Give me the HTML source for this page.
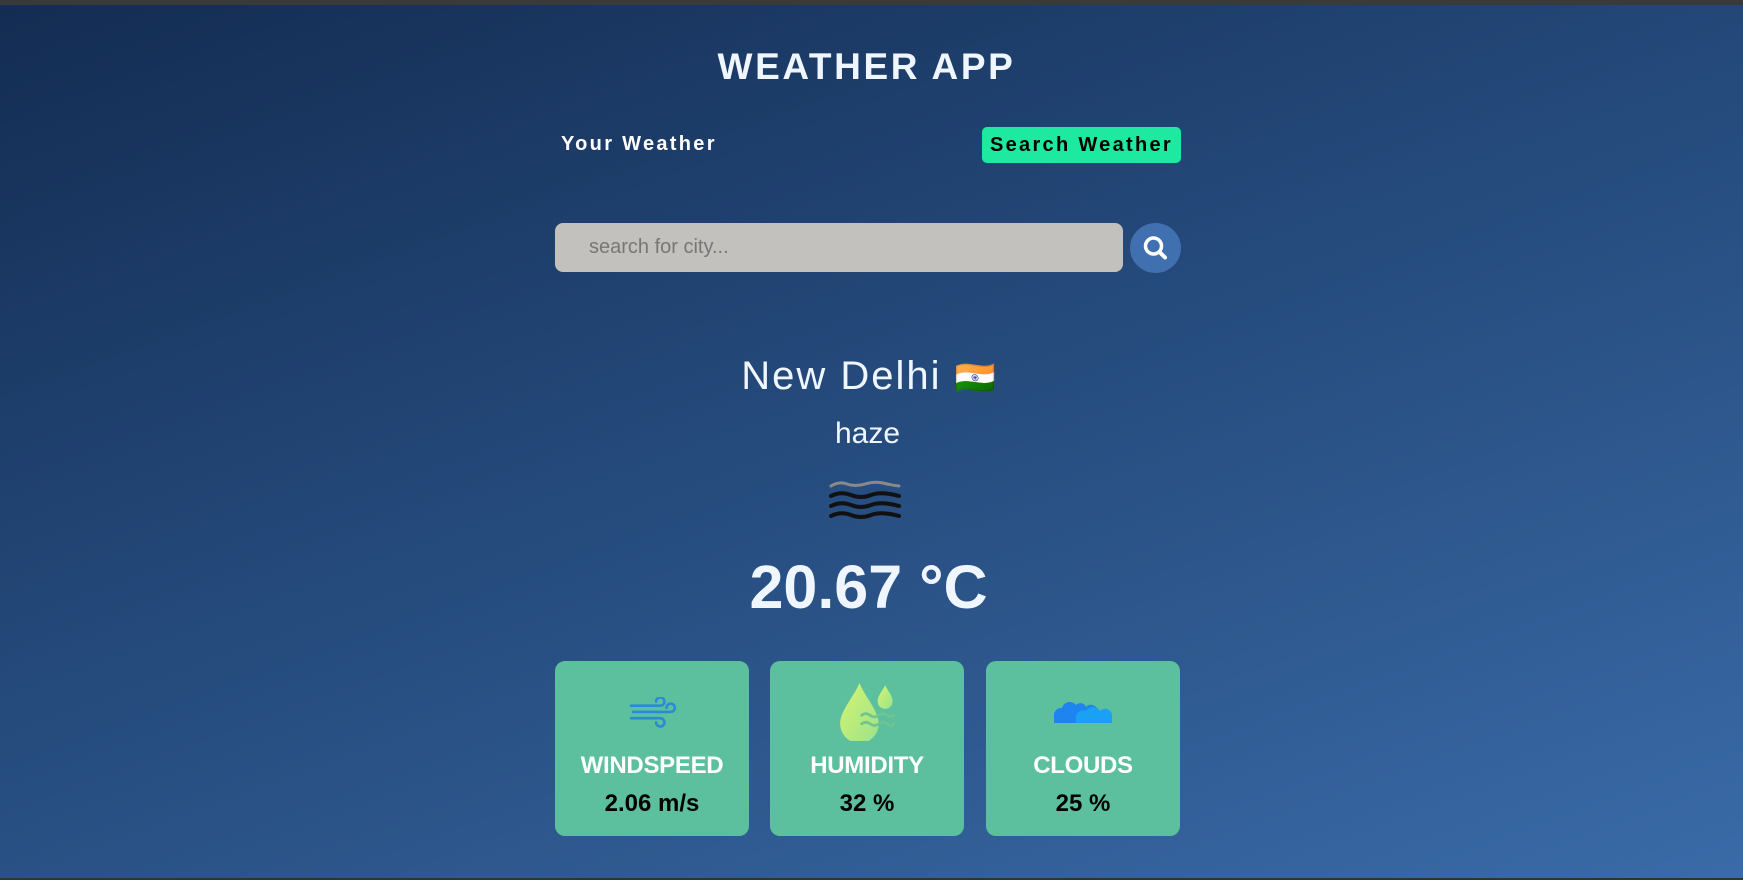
<!DOCTYPE html>
<html><head><meta charset="utf-8"><style>
*{margin:0;padding:0;box-sizing:border-box}
body{width:1743px;height:880px;overflow:hidden;font-family:"Liberation Sans",Arial,sans-serif;background:linear-gradient(160deg,#132c52 0%,#24497a 45%,#3a6ba8 100%);position:relative;color:#f0f6ff}
.topbar{position:absolute;left:0;top:0;width:100%;height:5px;background:#3a3a3a}
.bot{position:absolute;left:0;bottom:0;width:100%;height:2px;background:#333}
.abs{position:absolute}
h1{position:absolute;left:0;width:1743px;top:46px;text-align:center;font-size:37px;letter-spacing:2.6px;font-weight:bold;color:#f0f6ff;margin-left:-5px}
.yw{left:561px;top:133px;font-size:20px;font-weight:bold;letter-spacing:2.3px;color:#fff}
.sw{left:982px;top:127px;width:199px;height:36px;background:#1de9a0;border-radius:5px;color:#000;font-size:20px;font-weight:bold;letter-spacing:2.3px;text-align:center;line-height:36px}
.inp{left:555px;top:223px;width:568px;height:49px;background:#c2c1bd;border-radius:8px;color:#777;font-size:20px;line-height:49px;padding-left:34px}
.btn{left:1130px;top:223px;width:51px;height:50px;border-radius:50%;background:#4170b0}
.city{left:0;width:1743px;top:354px;text-align:center;font-size:40px;letter-spacing:2px;color:#f0f6ff;margin-left:-3px}
.haze{left:0;width:1743px;top:417px;text-align:center;font-size:30px;color:#f0f6ff;margin-left:-4px}
.temp{left:0;width:1743px;top:552px;text-align:center;font-size:61px;font-weight:bold;color:#f0f6ff;margin-left:-3px}
.card{top:661px;width:194px;height:175px;background:#5cc09e;border-radius:10px;text-align:center}
.card .l{position:absolute;left:0;width:100%;top:91px;font-size:24px;font-weight:bold;color:#fff;letter-spacing:-0.3px}
.card .v{position:absolute;left:0;width:100%;top:129px;font-size:24px;font-weight:bold;color:#000}
.card svg{position:absolute}
</style></head><body>
<div class="topbar"></div>
<h1>WEATHER APP</h1>
<div class="abs yw">Your Weather</div>
<div class="abs sw">Search Weather</div>
<div class="abs inp">search for city...</div>
<div class="abs btn"><svg width="51" height="50" viewBox="0 0 51 50"><circle cx="23.5" cy="23" r="8" fill="none" stroke="#fff" stroke-width="3.5"/><line x1="29.5" y1="29" x2="35" y2="34.5" stroke="#fff" stroke-width="4" stroke-linecap="round"/></svg></div>
<div class="abs city">New Delhi <span style="font-family:'Noto Color Emoji',sans-serif;font-size:33px;letter-spacing:0">🇮🇳</span></div>
<div class="abs haze">haze</div>
<svg class="abs" style="left:829px;top:478px" width="72" height="46" viewBox="0 0 72 46"><g fill="none" stroke-width="4" stroke-linecap="round"><path d="M2 8 Q10 3 18 6 T36 6 T54 5 T70 8" stroke="#8a8a8a" stroke-width="3"/><path d="M2 18 Q12 13 22 17 T42 17 T70 18" stroke="#111"/><path d="M2 28 Q12 23 22 27 T42 27 T70 28" stroke="#111"/><path d="M2 38 Q12 33 22 37 T42 37 T70 38" stroke="#111"/></g></svg>
<div class="abs temp">20.67 °C</div>
<div class="abs card" style="left:555px"><svg style="left:74px;top:36px" width="50" height="32" viewBox="0 0 48 30"><g fill="none" stroke="#2a8ad8" stroke-width="2.5" stroke-linecap="round"><path d="M2 8H30a4 4 0 1 0-4-4"/><path d="M4 14H40a4 4 0 1 0-4-4"/><path d="M2 20H30a4 4 0 1 1-4 4"/></g></svg><div class="l">WINDSPEED</div><div class="v">2.06 m/s</div></div>
<div class="abs card" style="left:770px"><svg style="left:68px;top:20px" width="60" height="60" viewBox="0 0 56 56"><defs><linearGradient id="g" x1="0" y1="0" x2="1" y2="1"><stop offset="0" stop-color="#d6f56f"/><stop offset="1" stop-color="#9be28c"/></linearGradient></defs><path d="M20 2 C14 16 2 28 2 40 a18 18 0 0 0 36 0 C38 28 26 16 20 2Z" fill="url(#g)"/><path d="M44 4 C41 10 37 14 37 19 a7 7 0 0 0 14 0 C51 14 47 10 44 4Z" fill="url(#g)"/><g fill="none" stroke="#6fc48f" stroke-width="2.5" stroke-linecap="round"><path d="M22 32q4-3 8 0t8 0t8 0t6 0"/><path d="M22 40q4-3 8 0t8 0t8 0t6 0"/></g></svg><div class="l">HUMIDITY</div><div class="v">32 %</div></div>
<div class="abs card" style="left:986px"><svg style="left:66px;top:34px" width="62" height="30" viewBox="0 0 62 30"><path d="M2 28 V20 a7 7 0 0 1 8-7 a8 8 0 0 1 14-3 a6 6 0 0 1 10 2 a7 7 0 0 1 12 4 V28Z" fill="#1e84f0"/><path d="M24 28 V22 a7 7 0 0 1 10-6 a8 8 0 0 1 14 0 a7 7 0 0 1 12 6 V28Z" fill="#1aa0f5"/></svg><div class="l">CLOUDS</div><div class="v">25 %</div></div>
<div class="bot"></div>
</body></html>
